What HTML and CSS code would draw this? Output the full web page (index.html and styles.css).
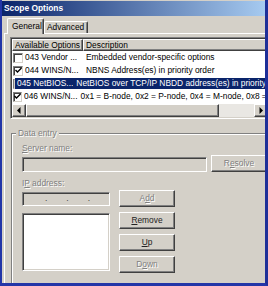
FILE: index.html
```html
<!DOCTYPE html>
<html lang="en">
	<head>
		<meta charset="UTF-8" />
		<title>Scope Options</title>
		<link rel="stylesheet" href="styles.css">
	</head>
	<body>
		<div class="window">
			<div class="title-bar">Scope Options</div>
			<div class="tabs">
				<div class="tab active">General</div>
				<div class="tab">Advanced</div>
			</div>
			<div class="tab-panel">
				<div class="list-view">
					<div class="list-header">
						<div class="col col-name">Available Options</div>
						<div class="col col-desc">Description</div>
					</div>
					<div class="list-rows">
						<div class="row">
							<span class="check"></span>
							<span class="cell cell-name">043 Vendor ...</span>
							<span class="cell cell-desc">Embedded vendor-specific options</span>
						</div>
						<div class="row">
							<span class="check checked"><svg width="7" height="7" viewBox="0 0 7 7"><path d="M0.5 3l2 2 4-4" /></svg></span>
							<span class="cell cell-name">044 WINS/N...</span>
							<span class="cell cell-desc">NBNS Address(es) in priority order</span>
						</div>
						<div class="row selected">
							<span class="check"></span>
							<span class="cell cell-name">045 NetBIOS...</span>
							<span class="cell cell-desc">NetBIOS over TCP/IP NBDD address(es) in priority order</span>
						</div>
						<div class="row">
							<span class="check checked"><svg width="7" height="7" viewBox="0 0 7 7"><path d="M0.5 3l2 2 4-4" /></svg></span>
							<span class="cell cell-name">046 WINS/N...</span>
							<span class="cell cell-desc">0x1 = B-node, 0x2 = P-node, 0x4 = M-node, 0x8 = H-node</span>
						</div>
					</div>
					<div class="h-scroll">
						<div class="sb-btn"><svg width="4" height="7" viewBox="0 0 4 7"><path d="M3.5 0v7L0 3.5z" /></svg></div>
						<div class="sb-thumb"></div>
						<div class="sb-track"></div>
						<div class="sb-btn"><svg width="4" height="7" viewBox="0 0 4 7"><path d="M0.5 0v7L4 3.5z" /></svg></div>
					</div>
				</div>

				<div class="group">
					<span class="group-label disabled">Data entry</span>
					<div class="field-label disabled"><u>S</u>erver name:</div>
					<div class="server-row">
						<div class="edit server-edit"></div>
						<div class="btn disabled">R<u>e</u>solve</div>
					</div>
					<div class="field-label disabled">I<u>P</u> address:</div>
					<div class="ip-row">
						<div class="ip-col">
							<div class="edit ip-edit"><span>.</span><span>.</span><span>.</span></div>
							<div class="listbox"></div>
						</div>
						<div class="btn-col">
							<div class="btn disabled">A<u>d</u>d</div>
							<div class="btn"><u>R</u>emove</div>
							<div class="btn"><u>U</u>p</div>
							<div class="btn disabled">D<u>o</u>wn</div>
						</div>
					</div>
				</div>
			</div>
		</div>
	</body>
</html>
```

FILE: styles.css
```css
body {
	margin: 0;
	width: 268px;
	height: 286px;
	overflow: hidden;
	font-family: "Liberation Sans", Arial, sans-serif;
	font-size: 8.4px;
	color: #000;
	background: #d4d0c8;
}
.window {
	box-sizing: border-box;
	height: 286px;
	border-left: 2px solid #2336a8;
	border-right: 3px solid #1e2f98;
	border-bottom: 3px solid #2336a8;
	background: #d4d0c8;
	overflow: hidden;
}
.title-bar {
	height: 15px;
	margin-top: 1px;
	padding-left: 2px;
	line-height: 15px;
	background: linear-gradient(to right, #0a246a, #a6caf0);
	color: #fff;
	font-weight: bold;
	white-space: nowrap;
}
.tabs {
	display: flex;
	align-items: flex-end;
	height: 15px;
	margin-top: 2px;
	padding-left: 5px;
}
.tab {
	box-sizing: border-box;
	width: 44px;
	height: 12px;
	padding-left: 2px;
	line-height: 11px;
	border: 1px solid;
	border-color: #fff #404040 transparent #fff;
	border-bottom: none;
	border-radius: 2px 2px 0 0;
	box-shadow: inset -1px 0 #808080;
	background: #d4d0c8;
	white-space: nowrap;
}
.tab.active {
	position: relative;
	z-index: 1;
	width: 37px;
	height: 16px;
	margin-bottom: -1px;
	padding-left: 4px;
	line-height: 15px;
}
.tab-panel {
	height: 260px;
	margin-left: 2px;
	border-top: 1px solid #fff;
	border-left: 1px solid #fff;
	padding-left: 5px;
	padding-top: 3px;
}

/* list view */
.list-view {
	box-sizing: border-box;
	width: 260px;
	height: 82px;
	padding: 1px;
	border: 1px solid;
	border-color: #808080 #fff #fff #808080;
	box-shadow: inset 1px 1px #404040, inset -1px -1px #d4d0c8;
	background: #fff;
	display: flex;
	flex-direction: column;
}
.list-header {
	display: flex;
	height: 12px;
	flex-shrink: 0;
}
.col {
	box-sizing: border-box;
	height: 12px;
	padding-left: 2px;
	line-height: 10px;
	background: #d4d0c8;
	border: 1px solid;
	border-color: #fff #404040 #404040 #fff;
	box-shadow: inset -1px -1px #808080;
	white-space: nowrap;
}
.col-name {
	width: 71px;
}
.col-desc {
	flex: 1;
}
.list-rows {
	flex: 1;
	overflow: hidden;
}
.row {
	display: flex;
	align-items: center;
	height: 13px;
	white-space: nowrap;
}
.check {
	box-sizing: border-box;
	width: 10px;
	height: 10px;
	margin-left: 1px;
	border: 1px solid;
	border-color: #808080 #d4d0c8 #d4d0c8 #808080;
	box-shadow: inset 1px 1px #404040;
	background: #fff;
	display: flex;
	align-items: center;
	justify-content: center;
}
.check svg {
	fill: none;
	stroke: #000;
	stroke-width: 1.4;
}
.cell {
	height: 11px;
	line-height: 11px;
}
.cell-name {
	box-sizing: border-box;
	width: 60px;
	padding-left: 2px;
}
.cell-desc {
	flex: 1;
	padding-left: 3px;
}
.selected .cell {
	background: #0a246a;
	color: #fff;
}
.h-scroll {
	display: flex;
	height: 13px;
	flex-shrink: 0;
	background: #e9e7e3;
}
.sb-btn,
.sb-thumb {
	box-sizing: border-box;
	height: 13px;
	background: #d4d0c8;
	border: 1px solid;
	border-color: #fff #404040 #404040 #fff;
	box-shadow: inset -1px -1px #808080;
}
.sb-btn {
	width: 14px;
	display: flex;
	align-items: center;
	justify-content: center;
}
.sb-thumb {
	width: 193px;
}
.sb-track {
	flex: 1;
}

/* data entry group */
.group {
	position: relative;
	box-sizing: border-box;
	width: 270px;
	height: 160px;
	margin-top: 14px;
	margin-left: 1px;
	padding: 9px 0 0 10px;
	border-top: 1px solid #808080;
	border-left: 1px solid #808080;
	box-shadow: inset 1px 1px #fff;
}
.group-label {
	position: absolute;
	left: 4px;
	top: -6px;
	padding: 0 2px;
	line-height: 10px;
	background: #d4d0c8;
}
.disabled {
	color: #808080;
	text-shadow: 1px 1px 0 #fff;
}
.field-label {
	height: 10px;
	line-height: 10px;
}
.server-row {
	display: flex;
	align-items: flex-end;
	gap: 4px;
	margin-top: 2px;
	margin-bottom: 6px;
}
.edit {
	box-sizing: border-box;
	border: 1px solid;
	border-color: #808080 #fff #fff #808080;
	box-shadow: inset 1px 1px #404040, inset -1px -1px #d4d0c8;
	background: #d4d0c8;
}
.server-edit {
	width: 185px;
	height: 15px;
}
.btn {
	box-sizing: border-box;
	width: 56px;
	height: 17px;
	line-height: 15px;
	text-align: center;
	background: #d4d0c8;
	border: 1px solid;
	border-color: #fff #404040 #404040 #fff;
	box-shadow: inset -1px -1px #808080;
	color: #222;
}
.btn.disabled {
	color: #808080;
}
.ip-row {
	display: flex;
	gap: 9px;
	margin-top: 2px;
}
.ip-col {
	width: 88px;
}
.ip-edit {
	height: 14px;
	margin-top: 2px;
	padding-left: 22px;
	display: flex;
	gap: 19px;
	line-height: 11px;
	color: #404040;
}
.listbox {
	height: 58px;
	margin-top: 7px;
	box-sizing: border-box;
	border: 1px solid;
	border-color: #808080 #fff #fff #808080;
	box-shadow: inset 1px 1px #404040, inset -1px -1px #d4d0c8;
	background: #fff;
}
.btn-col {
	display: flex;
	flex-direction: column;
	gap: 5px;
}
```
